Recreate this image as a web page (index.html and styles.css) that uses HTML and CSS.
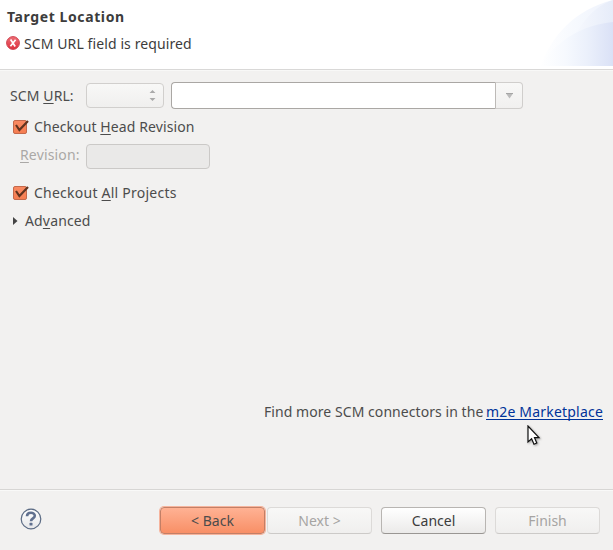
FILE: index.html
```html
<!DOCTYPE html>
<html lang="en">
<head>
<meta charset="utf-8">
<title>Target Location</title>
<link rel="stylesheet" href="styles.css">
</head>
<body>
<header class="banner">
  <div class="banner-text">
    <h1 class="title">Target Location</h1>
    <div class="message">
      <svg class="error-icon" width="14" height="14" viewBox="0 0 14 14">
        <defs><linearGradient id="red" x1="0" y1="0" x2="0" y2="1"><stop offset="0" stop-color="#ee7078"/><stop offset="1" stop-color="#dd2f3c"/></linearGradient></defs>
        <circle cx="7" cy="7" r="6.4" fill="url(#red)" stroke="#d04450" stroke-width="1"/>
        <path d="M4.6 3.6L9.2 10.4M9.6 3.8L4.4 10.2" fill="none" stroke="#fff" stroke-width="1.7"/>
      </svg>
      <span class="message-text">SCM URL field is required</span>
    </div>
  </div>
  <svg class="banner-art" width="75" height="66" viewBox="0 0 75 66">
    <defs>
      <linearGradient id="outer"><stop offset="0" stop-color="#fff"/><stop offset="0.5" stop-color="#f6f9fe"/><stop offset="1" stop-color="#eef2fc"/></linearGradient>
      <linearGradient id="middle"><stop offset="0" stop-color="#fbfcff"/><stop offset="1" stop-color="#e6ecf9"/></linearGradient>
      <linearGradient id="inner"><stop offset="0" stop-color="#fff"/><stop offset="0.35" stop-color="#f6f9fe"/><stop offset="0.65" stop-color="#ebf0fb"/><stop offset="1" stop-color="#dae1f6"/></linearGradient>
    </defs>
    <path d="M2 66C14 36 36 10 75 0V66Z" fill="url(#outer)"/>
    <path d="M26 66C33 36 50 8 75 0V66Z" fill="url(#middle)"/>
    <path d="M2 66C19 40 44 25 75 22V66Z" fill="url(#inner)"/>
  </svg>
</header>
<main class="content">
  <div class="row url-row">
    <label class="url-label">SCM <u>U</u>RL:</label>
    <div class="scm-type">
      <svg width="7" height="13" viewBox="0 0 7 13"><path d="M.5 4L3.5 1L6.5 4ZM.5 9L3.5 12L6.5 9Z" fill="#aaa"/></svg>
    </div>
    <div class="combo">
      <div class="combo-entry"></div>
      <div class="combo-button"><svg width="9" height="6" viewBox="0 0 9 6"><path d="M1 .5H8L4.5 5.5Z" fill="#bbb"/><path d="M1 .5H8" stroke="#a5a5a5"/></svg></div>
    </div>
  </div>
  <div class="row head-row">
    <svg class="check" width="17" height="16" viewBox="0 0 17 16">
      <defs><linearGradient id="box" x1="0" y1="0" x2="0" y2="1"><stop offset="0" stop-color="#f98a62"/><stop offset="1" stop-color="#f57d50"/></linearGradient></defs>
      <rect x="1.5" y="1.5" width="13" height="13" rx="1.5" fill="url(#box)" stroke="#c4694b"/>
      <path d="M4 6L7.4 11L16 2" fill="none" stroke="#60331f" stroke-width="2.2"/>
    </svg>
    <span class="head-label">Checkout <u>H</u>ead Revision</span>
  </div>
  <div class="row revision-row">
    <label class="revision-label"><u>R</u>evision:</label>
    <div class="revision-entry"></div>
  </div>
  <div class="row projects-row">
    <svg class="check" width="17" height="16" viewBox="0 0 17 16">
      <rect x="1.5" y="1.5" width="13" height="13" rx="1.5" fill="url(#box)" stroke="#c4694b"/>
      <path d="M4 6L7.4 11L16 2" fill="none" stroke="#60331f" stroke-width="2.2"/>
    </svg>
    <span class="projects-label">Checkout <u>A</u>ll Projects</span>
  </div>
  <div class="row advanced-row">
    <svg class="expander" width="5" height="8" viewBox="0 0 5 8"><path d="M0 0L4.5 4L0 8Z" fill="#444"/></svg>
    <span class="advanced-label">Ad<u>v</u>anced</span>
  </div>
  <p class="connectors"><span class="find">Find more SCM connectors in the</span><a class="market">m2e Marketplace</a></p>
</main>
<footer class="footer">
  <svg class="help" width="22" height="22" viewBox="0 0 22 22">
    <defs><linearGradient id="helpbg" x1="0" y1="0" x2="0" y2="1"><stop offset="0" stop-color="#fff"/><stop offset="1" stop-color="#e6e7e9"/></linearGradient></defs>
    <circle cx="11" cy="11" r="9.8" fill="url(#helpbg)" stroke="#5b6b84" stroke-width="1.2"/>
    <path d="M7 8.3C7 3.5 14.8 3.7 14.8 7.8C14.8 10.5 11 10.2 11 13.2" fill="none" stroke="#60708f" stroke-width="2.6"/>
    <rect x="9.5" y="14.8" width="3" height="2.7" rx=".6" fill="#60708f"/>
  </svg>
  <div class="buttons">
    <button class="btn back">&lt; Back</button>
    <button class="btn disabled next">Next &gt;</button>
    <button class="btn cancel">Cancel</button>
    <button class="btn disabled finish">Finish</button>
  </div>
</footer>
<svg class="pointer" width="14" height="21" viewBox="0 0 14 21">
  <path d="M1 1V17L4.6 13.7L7 19.2L9.8 18L7.5 12.7H12Z" fill="#fff" stroke="#111" stroke-width="1.2"/>
</svg>
</body>
</html>
```
FILE: styles.css
```css
* { box-sizing: border-box; }
body {
  margin: 0;
  width: 613px;
  height: 550px;
  overflow: hidden;
  display: flex;
  flex-direction: column;
  background: #f2f1f0;
  color: #4c4c4c;
  font: 14px/20px "Noto Sans", "Open Sans", sans-serif;
  white-space: nowrap;
}
svg { display: block; flex: none; }
u { text-decoration: underline; text-underline-offset: 2px; text-decoration-thickness: 1px; text-decoration-skip-ink: none; }
.banner { height: 70px; display: flex; justify-content: space-between; background: #fff; border-bottom: 1px solid #d9d8d7; }
.banner-text { padding: 7px 0 0 7px; }
.title { margin: 0; font-size: 14px; line-height: 20px; font-weight: 700; letter-spacing: .6px; color: #3c3c3c; }
.message { display: flex; align-items: center; margin: 7px 0 0 -1px; height: 20px; gap: 4px; color: #3c3c3c; }
.message-text, .head-label { letter-spacing: .1px; }
.error-icon { margin-top: -2px; }
.content { height: 419px; display: flex; flex-direction: column; border-top: 1px solid #f8f8f7; }
.row { display: flex; align-items: center; }
.url-row { height: 28px; margin-top: 11px; padding-left: 10px; }
.url-label { width: 76px; letter-spacing: .1px; }
.scm-type { width: 78px; height: 25px; margin-top: -1px; display: flex; align-items: center; justify-content: flex-end; padding-right: 7px; border: 1px solid #d1cfcd; border-radius: 4px; background: linear-gradient(#f8f8f7, #f0efee); }
.combo { display: flex; margin: -1px 0 0 7px; height: 27px; }
.combo-entry { width: 325px; border: 1px solid #aaa7a4; border-right-color: #bdbab7; border-radius: 4px 0 0 4px; background: #fff; }
.combo-button { width: 27px; display: flex; align-items: center; justify-content: center; border: 1px solid #d0cecc; border-left: 0; border-radius: 0 4px 4px 0; background: linear-gradient(#f8f8f7, #f1f0ef); }
.head-row { height: 20px; margin-top: 7px; padding-left: 12px; gap: 5px; }
.revision-row { height: 26px; margin-top: 6px; padding-left: 20px; color: #aaa8a6; }
.revision-label { width: 66px; margin-top: -3px; letter-spacing: .15px; }
.revision-entry { width: 124px; height: 25px; border: 1px solid #cbc9c7; border-radius: 4px; background: #eae9e8; }
.projects-row { height: 20px; margin-top: 14px; padding-left: 12px; gap: 5px; }
.projects-label { letter-spacing: .24px; }
.advanced-row { height: 20px; margin-top: 8px; padding-left: 13px; gap: 7px; }
.advanced-label { letter-spacing: .15px; }
.connectors { margin: 171px 10px 0 264px; display: flex; justify-content: space-between; height: 20px; }
.find { letter-spacing: .06px; }
.market { letter-spacing: .2px; color: #003399; line-height: 19px; height: 18px; border-bottom: 1px solid #003399; }
.footer { height: 61px; display: flex; justify-content: space-between; border-top: 1px solid #d7d6d4; box-shadow: inset 0 1px #f9f9f8; padding: 17px 13px 0 20px; }
.help { margin-top: 1px; }
.buttons { display: flex; }
.btn { width: 105px; height: 27px; padding: 1px 0 0; border: 1px solid #b8b5b2; border-bottom-color: #999693; border-radius: 4px; background: linear-gradient(#fff, #ebeae9); color: #4c4c4c; font: inherit; line-height: 24px; }
.back { border-color: #c37f66; background: linear-gradient(#ffb294, #f88f66); box-shadow: 0 0 0 1px #f6b49d; }
.next { margin-left: 2px; }
.cancel { margin-left: 9px; color: #3c3c3c; }
.finish { margin-left: 9px; }
.disabled { color: #a6a4a2; border-color: #dcdad8; border-bottom-color: #cccac8; background: linear-gradient(#f8f8f7, #f0efee); }
.pointer { position: absolute; left: 527px; top: 425px; filter: drop-shadow(1px 1px 1px rgba(0,0,0,.35)); }
```
